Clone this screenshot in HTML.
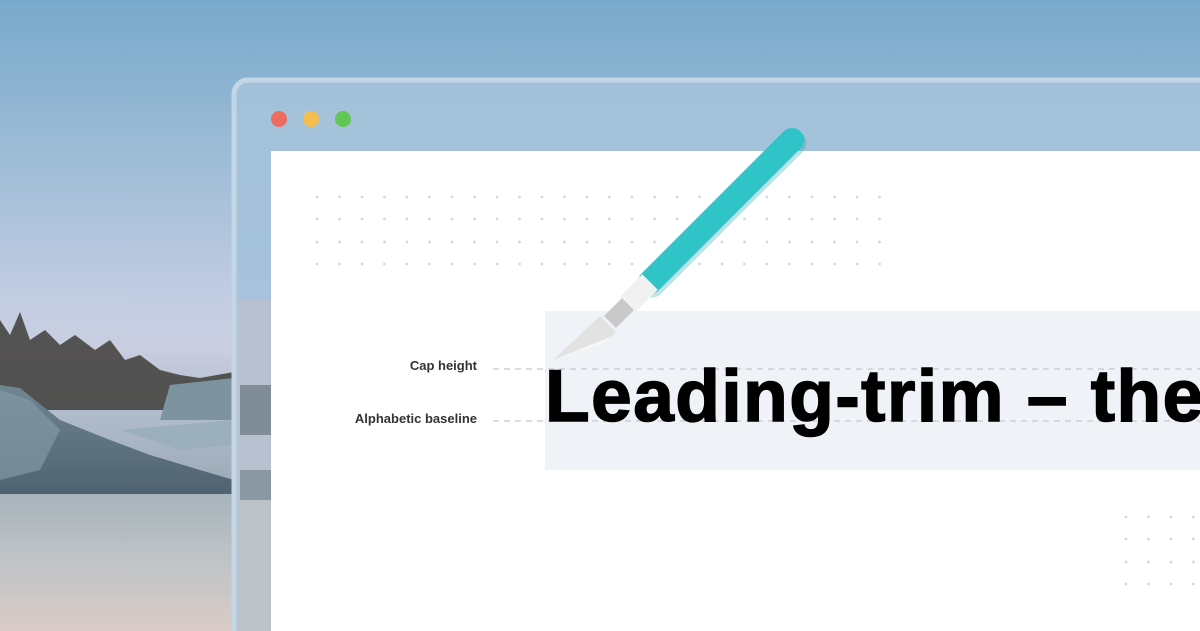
<!DOCTYPE html>
<html><head><style>
html,body{margin:0;width:1200px;height:631px;overflow:hidden;}
body{position:relative;font-family:"Liberation Sans",sans-serif;
background:linear-gradient(180deg,#78a9cb 0%,#9ebcd6 25%,#c3cde2 48%,#c9cee0 55%,#b8c2d2 62%,#9aa8b4 78%,#aab2b8 82%,#bfc2c6 90%,#d6c8c4 100%);}
svg{display:block}
</style></head><body>
<svg width="1200" height="631" style="position:absolute;left:0;top:0">
<defs>
<linearGradient id="sand" x1="0" y1="0" x2="0" y2="1"><stop offset="0" stop-color="#a7b4bb"/><stop offset="0.5" stop-color="#c0c4c7"/><stop offset="1" stop-color="#dacbc6"/></linearGradient>
<linearGradient id="rock" x1="0" y1="0" x2="0" y2="1"><stop offset="0" stop-color="#6f8591"/><stop offset="1" stop-color="#4f6270"/></linearGradient>
</defs>
<!-- vegetation -->
<path d="M0 320 L10 335 L20 312 L30 340 L45 330 L60 345 L75 335 L95 350 L110 340 L125 360 L140 355 L160 370 L180 375 L200 378 L234 372 L234 410 L0 410Z" fill="#403d3a" opacity="0.85"/>
<path d="M170 385 L234 378 L234 420 L160 420Z" fill="#7d94a0"/>
<!-- rocks -->
<path d="M0 385 L20 388 L60 420 L110 440 L150 455 L200 470 L234 480 L234 495 L0 495Z" fill="url(#rock)"/>
<path d="M0 390 L30 400 L60 430 L40 470 L0 480Z" fill="#8399a5" opacity="0.7"/>
<path d="M120 430 L234 420 L234 445 L180 450Z" fill="#9cb0bb"/>
<rect x="0" y="494" width="234" height="137" fill="url(#sand)"/>
<!-- frame -->
<rect x="234" y="80" width="1000" height="600" rx="14" fill="#a4c2da" opacity="0.95"/>
<rect x="236" y="300" width="35" height="331" fill="#b7c1cf"/>
<rect x="240" y="385" width="31" height="50" fill="#6d7b86" opacity="0.75"/>
<rect x="240" y="470" width="31" height="30" fill="#6e7c86" opacity="0.6"/>
<rect x="240" y="500" width="31" height="131" fill="#bcc2c8"/>
<rect x="234" y="80" width="1000" height="600" rx="14" fill="none" stroke="#c2d6e6" stroke-width="5"/>
<circle cx="279" cy="119" r="8" fill="#ee6b60"/>
<circle cx="311" cy="119" r="8" fill="#f6be4f"/>
<circle cx="343" cy="119" r="8" fill="#62c655"/>
<rect x="271" y="151" width="929" height="480" fill="#fff"/>
<g fill="#d6d6d6" id="dots"></g>
<rect x="545" y="311" width="655" height="159" fill="#eff3f8"/>
<line x1="493" y1="369" x2="1200" y2="369" stroke="#c3c8d2" stroke-width="1.3" stroke-dasharray="6 5"/>
<line x1="493" y1="421" x2="1200" y2="421" stroke="#c3c8d2" stroke-width="1.3" stroke-dasharray="6 5"/>
<text x="477" y="370" text-anchor="end" font-family="Liberation Sans" font-weight="bold" font-size="13" fill="#333">Cap height</text>
<text x="477" y="423" text-anchor="end" font-family="Liberation Sans" font-weight="bold" font-size="13" fill="#333">Alphabetic baseline</text>
<text x="545" y="421" font-family="Liberation Sans" font-weight="bold" font-size="73" letter-spacing="1.5" fill="#000" stroke="#000" stroke-width="1.5">Leading-trim – the</text>
<!-- knife -->
<line x1="650" y1="282" x2="792" y2="140" stroke="#22a8ad" stroke-width="25" stroke-linecap="round" transform="translate(2,3)" opacity="0.3"/>
<line x1="650" y1="282" x2="792" y2="140" stroke="#30c4c8" stroke-width="24" stroke-linecap="round"/>
<line x1="628" y1="304" x2="650" y2="282" stroke="#f1f1f1" stroke-width="22"/>
<line x1="610" y1="322" x2="628" y2="304" stroke="#c9c9c9" stroke-width="17"/>
<polygon points="600,316 616,332 605,343 553,360" fill="#e2e2e2"/>
<polygon points="605,343 553,360 610,337" fill="#f7f7f7"/>
</svg>
<script>
var g=document.getElementById('dots'),s='';
[197,219,242,264].forEach(function(y){for(var i=0;i<26;i++){s+='<circle cx="'+(317+22.5*i)+'" cy="'+y+'" r="1.4"/>';}});
[517,539,562,584].forEach(function(y){for(var i=0;i<4;i++){s+='<circle cx="'+(1126+22.5*i)+'" cy="'+y+'" r="1.4"/>';}});
g.innerHTML=s;
</script>
</body></html>
